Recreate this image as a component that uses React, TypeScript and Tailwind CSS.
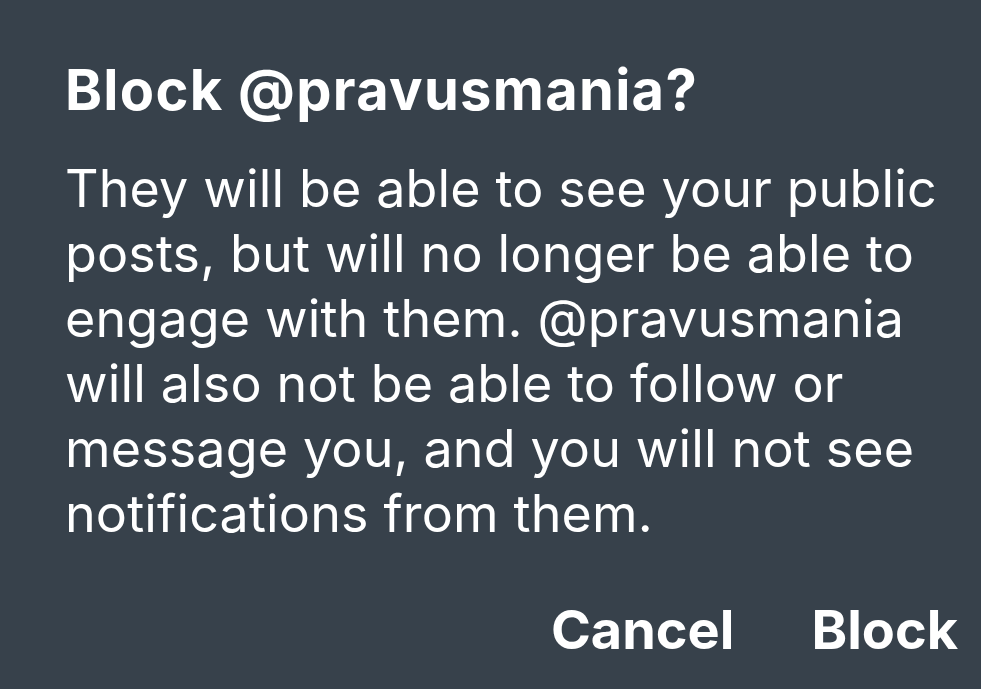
export default function App() {
  return (
    <div className="flex h-[689px] w-[981px] flex-col bg-[#37414b] pl-[65px] pr-[23px] pt-[58px] text-white" style={{ fontFamily: 'Inter, "Liberation Sans", sans-serif' }}>
      <h1 className="text-[56px] font-bold leading-[64px] tracking-[1.3px]">Block @pravusmania?</h1>
      <p className="mt-[34px] text-[52px] leading-[65px] tracking-[0.15px]">
        They will be able to see your public<br />
        posts, but will no longer be able to<br />
        engage with them. @pravusmania<br />
        will also not be able to follow or<br />
        message you, and you will not see<br />
        notifications from them.
      </p>
      <div className="mt-[52px] flex justify-end gap-[77px]">
        <button className="text-[54px] font-bold leading-[64px]">Cancel</button>
        <button className="text-[54px] font-bold leading-[64px]">Block</button>
      </div>
    </div>
  );
}
